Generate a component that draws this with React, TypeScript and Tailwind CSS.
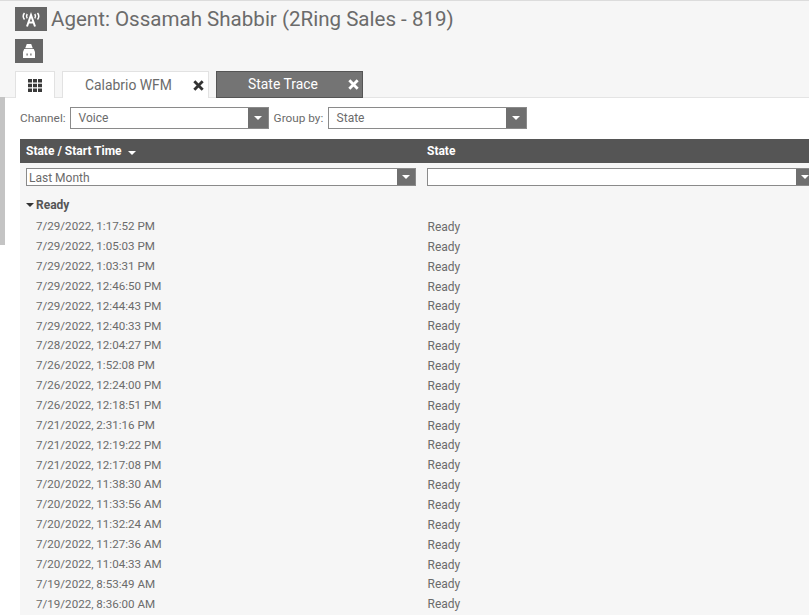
const rows = [
  "7/29/2022, 1:17:52 PM","7/29/2022, 1:05:03 PM","7/29/2022, 1:03:31 PM","7/29/2022, 12:46:50 PM","7/29/2022, 12:44:43 PM","7/29/2022, 12:40:33 PM","7/28/2022, 12:04:27 PM","7/26/2022, 1:52:08 PM","7/26/2022, 12:24:00 PM","7/26/2022, 12:18:51 PM","7/21/2022, 2:31:16 PM","7/21/2022, 12:19:22 PM","7/21/2022, 12:17:08 PM","7/20/2022, 11:38:30 AM","7/20/2022, 11:33:56 AM","7/20/2022, 11:32:24 AM","7/20/2022, 11:27:36 AM","7/20/2022, 11:04:33 AM","7/19/2022, 8:53:49 AM","7/19/2022, 8:36:00 AM",
];

function Caret({ className = "" }: { className?: string }) {
  return (
    <svg width="8" height="4" viewBox="0 0 8 4" className={className}>
      <path d="M0 0h8L4 4z" fill="currentColor" />
    </svg>
  );
}

function Select({ value, width }: { value: string; width: string }) {
  return (
    <div className={`flex h-[22px] shrink-0 border border-[#8a8a8a] bg-white ${width}`}>
      <div className="flex-1 pl-[8px] text-[12px] leading-[20px] text-[#6b6b6b]">{value}</div>
      <div className="flex w-[20px] items-center justify-center bg-[#6f6f6f] text-white">
        <Caret />
      </div>
    </div>
  );
}

function Close({ color }: { color: string }) {
  return (
    <svg width="11" height="11" viewBox="0 0 10 10">
      <path d="M1.2 1.2l7.6 7.6M8.8 1.2L1.2 8.8" stroke={color} strokeWidth="2.6" fill="none" />
    </svg>
  );
}

export default function App() {
  return (
    <div className="relative h-[615px] w-[809px] overflow-hidden bg-white font-['Roboto',sans-serif]">
      <div className="h-[97px] border-t border-[#dcdcdc] bg-[#f6f6f6] pl-[15px]">
        <div className="flex h-[31px] items-center pt-[5px]">
          <div className="flex h-[24px] w-[32px] items-center justify-center bg-[#666]">
            <svg width="24" height="18" viewBox="0 0 24 18" fill="none" stroke="white">
              <path d="M5.5 3c-1.6 2-1.6 4.5 0 6.5M18.5 3c1.6 2 1.6 4.5 0 6.5M8.2 4c-.9 1.3-.9 3 0 4.4M15.8 4c.9 1.3.9 3 0 4.4" strokeWidth="1.5" />
              <path d="M8 16.5L12 5l4 11.5M9.4 12.5h5.2" strokeWidth="2" />
            </svg>
          </div>
          <h1 className="ml-[4px] text-[20.55px] leading-[24px] font-normal text-[#6b6b6b]">Agent: Ossamah Shabbir (2Ring Sales - 819)</h1>
        </div>
        <div className="mt-[7px] flex h-[24px] w-[28px] items-center justify-center bg-[#666]">
          <svg width="14" height="16" viewBox="0 0 14 16" fill="white">
            <path d="M4.8 1h4.4l1.6 4.2H3.2zM2.2 6h9.6l1.2 3v6H1V9z" />
            <path d="M4.5 10.5h1.2v2H4.5zM8.3 10.5h1.2v2H8.3z" fill="#666" />
          </svg>
        </div>
        <div className="mt-[8px] flex h-[27px] items-stretch">
          <div className="flex w-[40px] items-center justify-center border border-b-0 border-[#e2e2e2] bg-white">
            <svg width="14" height="13" viewBox="0 0 14 13" fill="#3a3a3a">
              <path d="M0 0h4v3.5H0zM5 0h4v3.5H5zM10 0h4v3.5h-4zM0 4.7h4v3.5H0zM5 4.7h4v3.5H5zM10 4.7h4v3.5h-4zM0 9.4h4v3.5H0zM5 9.4h4v3.5H5zM10 9.4h4v3.5h-4z" />
            </svg>
          </div>
          <div className="ml-[7px] flex w-[147px] items-center border border-b-0 border-[#e2e2e2] bg-white pl-[22px] pr-[4px]">
            <span className="flex-1 text-[13.9px] text-[#6b6b6b]">Calabrio WFM</span>
            <Close color="#333" />
          </div>
          <div className="ml-[7px] flex w-[147px] items-center border border-[#555] bg-[#747474] pl-[31px] pr-[3px]">
            <span className="flex-1 text-[13.9px] text-white">State Trace</span>
            <Close color="#fff" />
          </div>
        </div>
      </div>
      <div className="h-px bg-[#e4e4e4]" />
      <div className="flex h-[41px] items-start pl-[20px] pt-[9px]">
        <span className="mt-[3px] text-[11.8px] leading-[16px] text-[#6b6b6b]">Channel:</span>
        <Select value="Voice" width="w-[199px] ml-[4px]" />
        <span className="ml-[5px] mt-[3px] w-[54px] text-[11.8px] leading-[16px] text-[#6b6b6b]">Group by:</span>
        <Select value="State" width="w-[199px]" />
      </div>
      <div className="ml-[20px] h-[476px] bg-[#f6f6f6]">
        <div className="flex h-[24px] items-center bg-[#555] text-[12px] font-bold text-white">
          <div className="flex w-[407px] items-center pl-[6px]">
            State / Start Time
            <Caret className="ml-[6px] mt-[3px]" />
          </div>
          <div>State</div>
        </div>
        <div className="flex h-[23px] items-end">
          <div className="ml-[6px] shrink-0">
            <div className="flex h-[18px] w-[390px] border border-[#8a8a8a] bg-white">
              <div className="flex-1 pl-[2px] text-[12px] leading-[18px] text-[#6b6b6b]">Last Month</div>
              <div className="flex w-[18px] items-center justify-center bg-[#6f6f6f] text-white"><Caret /></div>
            </div>
          </div>
          <div className="ml-[11px] shrink-0">
            <div className="flex h-[18px] w-[400px] border border-[#8a8a8a] bg-white">
              <div className="flex-1" />
              <div className="flex w-[30px] items-center bg-[#6f6f6f] pl-[5px] text-white"><Caret /></div>
            </div>
          </div>
        </div>
        <div className="mt-[10px] flex h-[18px] items-center pl-[6px] text-[12px] font-bold text-[#555]">
          <Caret className="mr-[2px] text-[#333]" />
          Ready
        </div>
        <div className="pt-[3px]">
          {rows.map((r) => (
            <div key={r} className="flex h-[19.87px] items-center text-[#6b6b6b]">
              <div className="ml-[16px] w-[391.5px] text-[11.6px]">{r}</div>
              <div className="text-[12px]">Ready</div>
            </div>
          ))}
        </div>
      </div>
      <div className="absolute left-0 top-[97px] h-[148px] w-[5px] bg-[#c4c4c4]" />
    </div>
  );
}
